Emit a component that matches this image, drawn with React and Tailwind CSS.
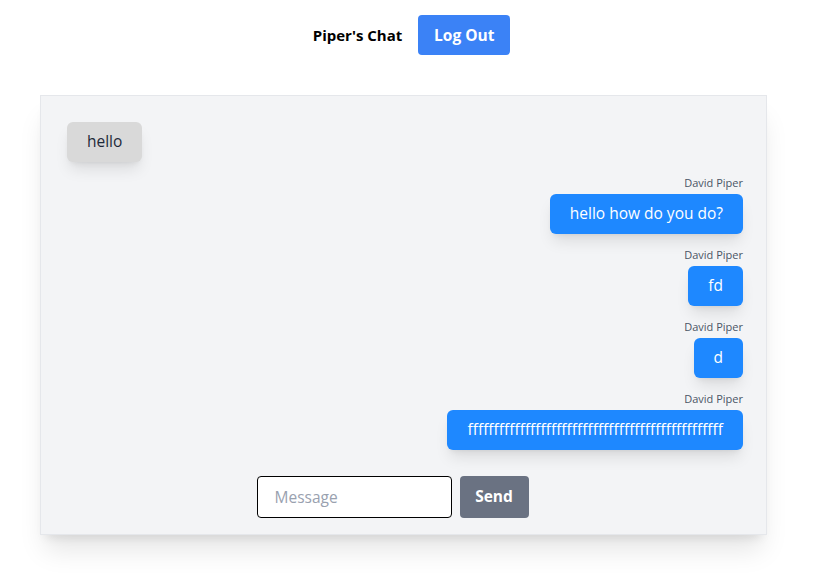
import React from "react";

const messages = [
  { id: 1, text: "hello how do you do?", name: "David Piper" },
  { id: 2, text: "fd", name: "David Piper" },
  { id: 3, text: "d", name: "David Piper" },
  { id: 4, text: "f".repeat(49), name: "David Piper" },
];

export default function App() {
  return (
    <div className="min-h-screen bg-white font-['Open_Sans',sans-serif] text-black">
      {/* Header */}
      <div className="flex items-center justify-center gap-4 pt-[15px] pl-[10px]">
        <h1 className="text-[15px] font-bold">Piper's Chat</h1>
        <button className="h-10 w-[92px] rounded bg-[#3b82f6] text-[15.5px] font-bold leading-10 text-white">
          Log Out
        </button>
      </div>

      {/* Chat box */}
      <div className="mt-10 ml-10 w-[727px] border border-gray-200 bg-[#f3f4f6] pl-6 pr-[23px] pt-[26px] pb-4 shadow-xl">
        <div className="flex flex-col">
          <div className="flex">
            <div className="ml-[2px] flex h-10 items-center rounded-md bg-[#d9d9d9] px-5 text-[15.5px] text-gray-800 shadow-lg">
              hello
            </div>
          </div>

          {messages.map((m) => (
            <div key={m.id} className="mt-[15px] flex flex-col items-end">
              <span className="text-[11px] leading-3 text-gray-600">{m.name}</span>
              <div className="mt-[5px] flex h-10 items-center rounded-md bg-[#1e88ff] px-5 text-[15.5px] text-white shadow-lg">
                {m.text}
              </div>
            </div>
          ))}
        </div>

        {/* Input row */}
        <div className="mt-[26px] flex justify-center gap-2 pr-[23px]">
          <input
            placeholder="Message"
            className="h-[42px] w-[195px] rounded border border-black bg-white px-[17px] text-[15.5px] placeholder:text-gray-400 outline-none"
          />
          <button className="h-[42px] w-[69px] rounded bg-gray-500 text-[15.5px] font-bold text-white">
            Send
          </button>
        </div>
      </div>
    </div>
  );
}
